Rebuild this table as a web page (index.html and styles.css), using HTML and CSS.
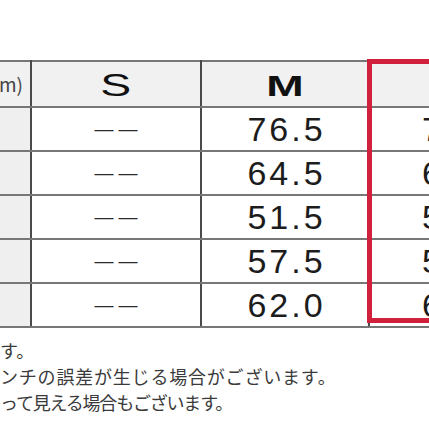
FILE: index.html
```html
<!DOCTYPE html>
<html lang="ja">
<head>
<meta charset="utf-8">
<title>サイズ表</title>
<link rel="stylesheet" href="styles.css">
</head>
<body>
<div class="page">
  <div class="sheet">
    <table class="size-table">
      <colgroup>
        <col class="c-label"><col class="c-s"><col class="c-m"><col class="c-l">
      </colgroup>
      <tr class="head">
        <th class="label"><span class="unit">サイズ(cm)</span></th>
        <th><span class="wide s">S</span></th>
        <th><span class="wide m">M</span></th>
        <th><span class="wide m">L</span></th>
      </tr>
      <tr><th class="label">着丈</th><td class="dash">——</td><td class="num">76.5</td><td class="num">78.5</td></tr>
      <tr><th class="label">身幅</th><td class="dash">——</td><td class="num">64.5</td><td class="num">66.5</td></tr>
      <tr><th class="label">肩幅</th><td class="dash">——</td><td class="num">51.5</td><td class="num">53.0</td></tr>
      <tr><th class="label">袖丈</th><td class="dash">——</td><td class="num">57.5</td><td class="num">58.5</td></tr>
      <tr><th class="label">裄丈</th><td class="dash">——</td><td class="num">62.0</td><td class="num">64.0</td></tr>
    </table>
    <div class="highlight"></div>
  </div>
  <div class="notes">
    <p class="n1">す。</p>
    <p class="n2">ンチの誤差が生じる場合がございます。</p>
    <p class="n3">って見える場合もございます。</p>
  </div>
</div>
</body>
</html>
```
FILE: styles.css
```css
html, body {
  margin: 0;
  padding: 0;
  background: #ffffff;
}

.page {
  width: 429px;
  height: 429px;
  overflow: hidden;
  font-family: "Noto Sans CJK JP", "Liberation Sans", sans-serif;
}

.sheet {
  position: relative;
  margin-top: 60px;
  margin-left: -70px;
  width: 640px;
}

.size-table {
  border-collapse: collapse;
  table-layout: fixed;
  width: 619px;
}

.c-label { width: 100px; }
.c-s { width: 170px; }
.c-m { width: 168px; }
.c-l { width: 181px; }

.size-table th,
.size-table td {
  height: 42px;
  padding: 0;
  line-height: 40px;
  white-space: nowrap;
  overflow: hidden;
  text-align: center;
  vertical-align: middle;
  border-top: 2px solid #777777;
  border-bottom: 2px solid #777777;
  border-left: 2px solid #4a4a4a;
  border-right: 2px solid #4a4a4a;
  background: #ffffff;
}

.size-table .head th {
  background: #f1f1f1;
  padding-top: 6px;
  height: 36px;
  line-height: 34px;
}

.size-table .label {
  background: #efefef;
  font-family: "Noto Sans CJK JP", sans-serif;
  font-weight: 400;
  font-size: 18px;
  color: #444444;
}

.size-table .head .label {
  text-align: right;
  padding-top: 0;
  height: 42px;
  line-height: 40px;
  padding-right: 7px;
}

.unit {
  display: inline-block;
  float: right;
  font-size: 19px;
}

.wide {
  display: inline-block;
  font-family: "Liberation Sans", Arial, sans-serif;
  color: #111111;
}

.wide.s {
  font-size: 32px;
  font-weight: 400;
  transform: scaleX(1.45);
}

.wide.m {
  font-size: 29px;
  font-weight: 700;
  transform: scaleX(1.55);
}

.num {
  font-family: "Liberation Sans", Arial, sans-serif;
  font-size: 34px;
  letter-spacing: 3px;
  padding-left: 3px !important;
  color: #1c1c1c;
}

.dash {
  font-family: "Liberation Sans", Arial, sans-serif;
  font-size: 19px;
  letter-spacing: 5px;
  padding-left: 5px !important;
  color: #2a2a2a;
}

.highlight {
  position: absolute;
  left: 437px;
  top: -1px;
  width: 200px;
  height: 264px;
  box-sizing: border-box;
  border: 5.5px solid #d0203b;
}

.notes {
  margin-top: 9px;
  font-size: 18px;
  line-height: 26px;
  color: #3a3a3a;
}

.notes p {
  margin: 0;
  white-space: nowrap;
}

.n1 { margin-left: -2px; }
.n2 { letter-spacing: 0.8px; }
.n3 { margin-left: -5px; letter-spacing: -1.2px; }
```
